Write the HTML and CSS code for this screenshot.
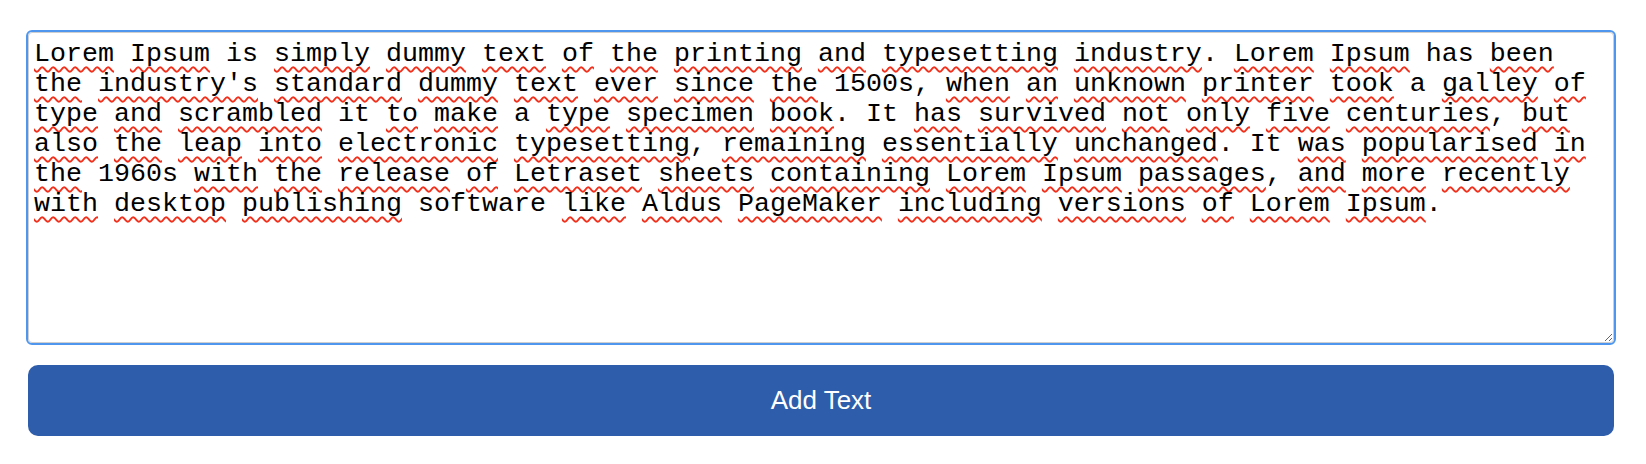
FILE: index.html
```html
<!DOCTYPE html>
<html lang="en">
<head>
<meta charset="utf-8">
<title>Add Text</title>
<link rel="stylesheet" href="styles.css">
</head>
<body>
<main class="page">
  <div class="editor"><span class="sp">Lorem</span> <span class="sp">Ipsum</span> is <span class="sp">simply</span> <span class="sp">dummy</span> <span class="sp">text</span> <span class="sp">of</span> <span class="sp">the</span> <span class="sp">printing</span> <span class="sp">and</span> <span class="sp">typesetting</span> <span class="sp">industry</span>. <span class="sp">Lorem</span> <span class="sp">Ipsum</span> has <span class="sp">been</span> <span class="sp">the</span> <span class="sp">industry's</span> <span class="sp">standard</span> <span class="sp">dummy</span> <span class="sp">text</span> <span class="sp">ever</span> <span class="sp">since</span> <span class="sp">the</span> 1500s, <span class="sp">when</span> <span class="sp">an</span> <span class="sp">unknown</span> <span class="sp">printer</span> <span class="sp">took</span> a <span class="sp">galley</span> <span class="sp">of</span> <span class="sp">type</span> <span class="sp">and</span> <span class="sp">scrambled</span> it <span class="sp">to</span> <span class="sp">make</span> a <span class="sp">type</span> <span class="sp">specimen</span> <span class="sp">book</span>. It <span class="sp">has</span> <span class="sp">survived</span> <span class="sp">not</span> <span class="sp">only</span> <span class="sp">five</span> <span class="sp">centuries</span>, <span class="sp">but</span> <span class="sp">also</span> <span class="sp">the</span> <span class="sp">leap</span> <span class="sp">into</span> <span class="sp">electronic</span> <span class="sp">typesetting</span>, <span class="sp">remaining</span> <span class="sp">essentially</span> <span class="sp">unchanged</span>. It <span class="sp">was</span> <span class="sp">popularised</span> <span class="sp">in</span> <span class="sp">the</span> 1960s <span class="sp">with</span> <span class="sp">the</span> <span class="sp">release</span> <span class="sp">of</span> <span class="sp">Letraset</span> <span class="sp">sheets</span> <span class="sp">containing</span> <span class="sp">Lorem</span> <span class="sp">Ipsum</span> <span class="sp">passages</span>, <span class="sp">and</span> <span class="sp">more</span> <span class="sp">recently</span> <span class="sp">with</span> <span class="sp">desktop</span> <span class="sp">publishing</span> software <span class="sp">like</span> <span class="sp">Aldus</span> <span class="sp">PageMaker</span> <span class="sp">including</span> <span class="sp">versions</span> <span class="sp">of</span> <span class="sp">Lorem</span> <span class="sp">Ipsum</span>.</div>
  <button class="add-btn" type="button">Add Text</button>
</main>
</body>
</html>
```

FILE: styles.css
```css
html, body {
  margin: 0;
  padding: 0;
  background: #ffffff;
}

.page {
  display: flex;
  flex-direction: column;
  align-items: flex-start;
  gap: 22px;
  padding: 32px 0 0 28px;
}

.editor {
  box-sizing: border-box;
  width: 1586px;
  height: 311px;
  padding: 6px 5px;
  border: 1px solid #cfcfcf;
  border-radius: 4px;
  outline: 2px solid #4f97ee;
  background: #ffffff;
  color: #000000;
  font-family: "Liberation Mono", "DejaVu Sans Mono", monospace;
  font-size: 26.67px;
  line-height: normal;
  white-space: pre-wrap;
  overflow: auto;
  resize: both;
}

.sp {
  text-decoration-line: underline;
  text-decoration-style: wavy;
  text-decoration-color: #f2301b;
  text-decoration-thickness: 1.5px;
  text-underline-offset: 5px;
  text-decoration-skip-ink: none;
}

.add-btn {
  box-sizing: border-box;
  width: 1586px;
  height: 71px;
  border: none;
  border-radius: 10px;
  background: #2d5dab;
  color: #ffffff;
  font-family: "Liberation Sans", Arial, sans-serif;
  font-size: 26px;
  cursor: pointer;
}
```
